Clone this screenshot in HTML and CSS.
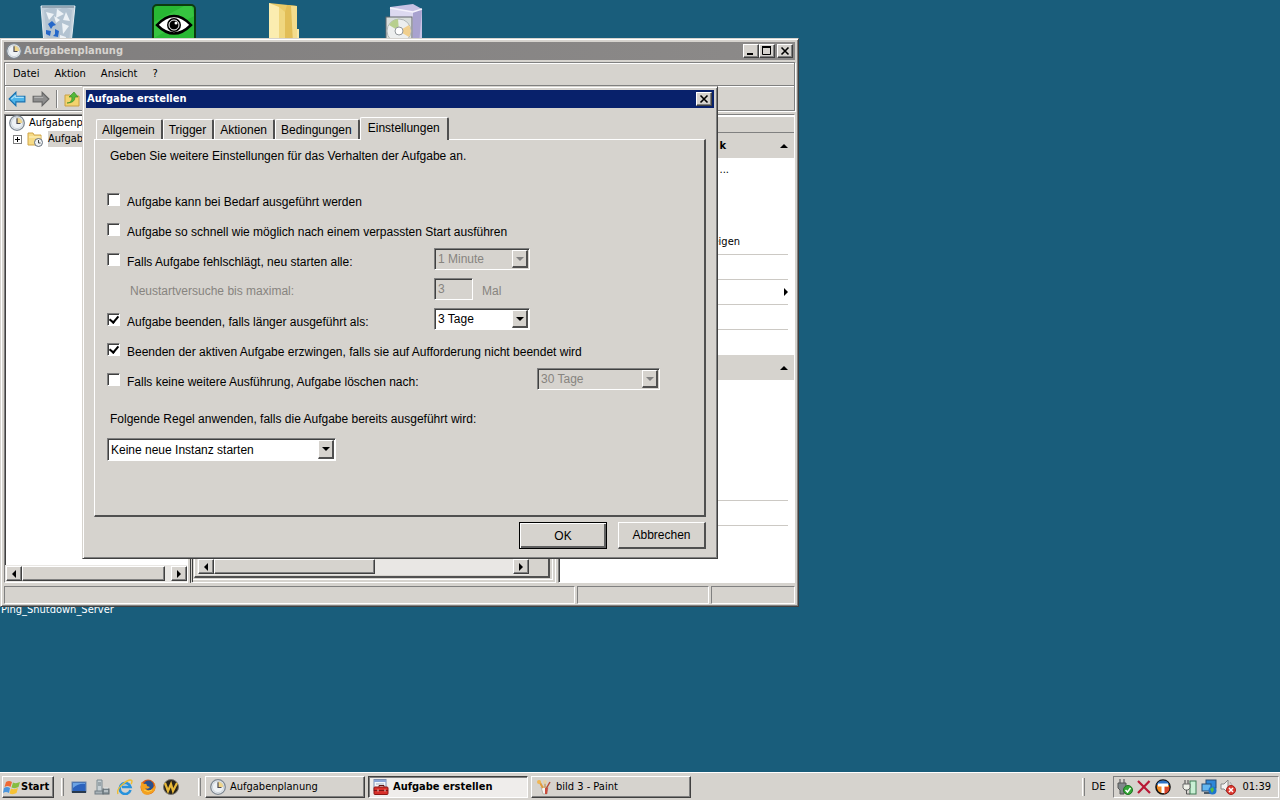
FILE: index.html
```
<!DOCTYPE html>
<html lang="de">
<head>
    <meta charset="utf-8">
    <title>Aufgabenplanung</title>
    <link rel="stylesheet" href="styles.css">
</head>
<body>
    <!-- shared icons -->
    <svg class="sprite" aria-hidden="true">
        <symbol id="clock" viewBox="0 0 16 16">
            <circle cx="8" cy="8" r="7.3" fill="#eef2f5" stroke="#7d8791" stroke-width="1.3"/>
            <path d="M8 8V2.2A5.8 5.8 0 0 1 13.8 8z" fill="#f0d58a"/>
            <circle cx="8" cy="8" r="5.6" fill="none" stroke="#c4cdd6" stroke-width=".8"/>
            <path d="M8 3.2V8.5H11.5" fill="none" stroke="#4c4a52" stroke-width="1.2"/>
        </symbol>
        <symbol id="close" viewBox="0 0 12 10">
            <path d="M2.5 1.5l7 7M9.5 1.5l-7 7" stroke="#000" stroke-width="1.6"/>
        </symbol>
    </svg>

    <div class="desktop">
        <svg class="shortcut recycle" width="36" height="40" viewBox="0 0 36 40">
            <path d="M1 2L35 2L31 40H4z" fill="#c3d0db" stroke="#e4edf3"/>
            <path d="M4 6l9-3 5 3 6-3 8 3-3 32H7z" fill="#b3c3d1"/>
            <path d="M6 8l8 2-5 6zM17 5l7 5-8 4zM26 8l4 9-7-1zM22 19l7 3-6 8zM14 12l6 4-4 3zM20 31l6 2-1 6-6-1z" fill="#edf2f6"/>
            <path d="M2 3h32" stroke="#93a5b3" stroke-width="2"/>
            <path d="M8 20l4-3 4 4-3 1-2 3zM15 25l4 2-1 6-5-1 2-2zM6 26l5 1-1 5-4-2z" fill="#2467c9"/>
        </svg>
        <svg class="shortcut eye" width="44" height="40" viewBox="0 0 44 40">
            <rect x="1" y="1" width="42" height="44" rx="4" fill="#28b834" stroke="#0c3b10" stroke-width="2"/>
            <path d="M2 18L32 2H40L42 12 2 34z" fill="#3fcb49" opacity=".6"/>
            <path d="M5 21Q22 3 39 21Q22 38 5 21z" fill="#fff" stroke="#000" stroke-width="2.500"/>
            <circle cx="22" cy="21" r="7" fill="#000"/>
            <circle cx="22" cy="21" r="5" fill="none" stroke="#fff"/>
            <circle cx="24" cy="19" r="1.500" fill="#fff"/>
        </svg>
        <svg class="shortcut folder" width="30" height="40" viewBox="0 0 30 40">
            <path d="M0 0L19 2L28 3V40H0z" fill="#e9cb68"/>
            <path d="M0 0L10 4V40H0z" fill="#fbedb0"/>
            <path d="M10 4L16 9V40H10z" fill="#f0d77f"/>
            <path d="M16 9L18 2 28 3V40H16z" fill="#e2be57"/>
            <path d="M22 3h6V40h-4z" fill="#f3dc8d"/>
            <path d="M28 26h2V40h-2z" fill="#f7e8aa"/>
        </svg>
        <svg class="shortcut setup" width="38" height="40" viewBox="0 0 38 40">
            <path d="M5 3L28 0L37 5V40H6z" fill="#c8c2e4"/>
            <path d="M5 3L28 8V40H6z" fill="#dcd9f0"/>
            <path d="M28 8l9-3-3 35h-6z" fill="#a8a2cf"/>
            <path d="M5 4l23 4 9-3" fill="none" stroke="#f4f2fc" stroke-width="1.5"/>
            <rect x="1" y="13" width="26" height="30" fill="#d9dedb" stroke="#62666c"/>
            <circle cx="14" cy="27" r="12" fill="#eceeee" stroke="#b0b6b6"/>
            <path d="M14 27L4 21A12 12 0 0 1 13 15z" fill="#b7cf8e"/>
            <path d="M14 27L24 21A12 12 0 0 1 24 33z" fill="#f0cf8e"/>
            <circle cx="14" cy="27" r="4" fill="#fff" stroke="#92979b"/>
        </svg>
        <div class="shortcut-label">Ping_Shutdown_Server</div>

        <!-- main window -->
        <div class="window app">
            <div class="titlebar inactive">
                <svg width="16" height="16"><use href="#clock"/></svg>
                <span class="caption">Aufgabenplanung</span>
                <button class="sys" aria-label="Minimieren"><svg width="12" height="10" viewBox="0 0 12 10"><path d="M2 8h6" stroke="#000" stroke-width="2"/></svg></button>
                <button class="sys" aria-label="Maximieren"><svg width="12" height="10" viewBox="0 0 12 10"><path d="M1.5 1v7.5h8V1M1 1h9" fill="none" stroke="#000"/><path d="M1 1h9" stroke="#000" stroke-width="2"/></svg></button>
                <button class="sys last" aria-label="Schließen"><svg width="12" height="10"><use href="#close"/></svg></button>
            </div>
            <div class="bars">
                <div class="menu">
                    <button>Datei</button>
                    <button>Aktion</button>
                    <button>Ansicht</button>
                    <button>?</button>
                </div>
                <div class="toolbar">
                    <svg width="18" height="16" viewBox="0 0 16 14"><path d="M1 7L7 1V4.500H15V9.500H7V13z" fill="#4db4ea" stroke="#1670b0"/><path d="M3 7L6.500 4V5.500H14" fill="none" stroke="#a9e0fa"/></svg>
                    <svg width="18" height="16" viewBox="0 0 16 14"><path d="M15 7L9 1V4.500H1V9.500H9V13z" fill="#8d8d8d" stroke="#666"/><path d="M2 5.500H10" stroke="#b8b8b8"/></svg>
                    <span class="divider"></span>
                    <svg width="16" height="16" viewBox="0 0 16 16"><path d="M1 4h5l1 1h8v10H1z" fill="#f3d36d" stroke="#c9a046"/><path d="M3 12Q8 12 8 6H5L10 1l4 5h-3Q11 12 3 12z" fill="#54b83a" stroke="#2d8520" stroke-width=".6"/></svg>
                </div>
            </div>
            <div class="main">
                <div class="pane tree">
                    <div class="tree-items">
                        <div class="node"><svg width="16" height="16"><use href="#clock"/></svg><span>Aufgabenp</span></div>
                        <div class="node child">
                            <svg width="9" height="9" viewBox="0 0 9 9"><rect x=".5" y=".5" width="8" height="8" fill="#fff" stroke="#808080"/><path d="M2 4.500h5M4.500 2v5" stroke="#000"/></svg>
                            <svg width="16" height="16" viewBox="0 0 16 16"><path d="M1 2h5l1 2h7v10H1z" fill="#f6db86" stroke="#d0a548"/><path d="M2 6h12" stroke="#fdf2c4"/><circle cx="11.500" cy="11.500" r="4" fill="#eef2f5" stroke="#66717c"/><path d="M11.500 9v3h2" fill="none" stroke="#444"/></svg>
                            <span class="selected">Aufgab</span>
                        </div>
                    </div>
                    <div class="scrollbar">
                        <button aria-label="Nach links"><i class="left"></i></button>
                        <span class="thumb wide"></span>
                        <button aria-label="Nach rechts"><i class="right"></i></button>
                    </div>
                </div>
                <div class="pane middle">
                    <div class="inner">
                        <div class="scrollbar">
                            <button aria-label="Nach links"><i class="left"></i></button>
                            <span class="thumb"></span>
                            <button aria-label="Nach rechts"><i class="right"></i></button>
                        </div>
                    </div>
                </div>
                <div class="pane actions">
                    <div class="actions-head"></div>
                    <div class="group"><b>k</b><i class="up"></i></div>
                    <div class="items">
                        <div class="item"><span>...</span></div>
                        <div class="item"></div>
                        <div class="item"></div>
                        <div class="item line"><span class="longer">eigen</span></div>
                        <div class="item line"></div>
                        <div class="item line"><i class="right"></i></div>
                        <div class="item line"></div>
                        <div class="item line last-line"></div>
                    </div>
                    <div class="group"><i class="up"></i></div>
                    <div class="items">
                        <div class="item"></div>
                        <div class="item"></div>
                        <div class="item"></div>
                        <div class="item"></div>
                        <div class="item line"></div>
                        <div class="item line"></div>
                    </div>
                </div>
            </div>
            <div class="status"><span></span><span></span><span></span></div>
        </div>

        <!-- dialog -->
        <div class="window dialog" role="dialog" aria-label="Aufgabe erstellen">
            <div class="titlebar">
                <span class="caption">Aufgabe erstellen</span>
                <button class="sys last" aria-label="Schließen"><svg width="12" height="10"><use href="#close"/></svg></button>
            </div>
            <div class="dialog-body">
                <div class="tabs" role="tablist">
                    <button role="tab">Allgemein</button>
                    <button role="tab">Trigger</button>
                    <button role="tab">Aktionen</button>
                    <button role="tab">Bedingungen</button>
                    <button role="tab" class="active" aria-selected="true">Einstellungen</button>
                </div>
                <div class="panel">
                    <p>Geben Sie weitere Einstellungen für das Verhalten der Aufgabe an.</p>
                    <div class="options">
                        <div class="row">
                            <input type="checkbox" id="demand">
                            <label for="demand">Aufgabe kann bei Bedarf ausgeführt werden</label>
                        </div>
                        <div class="row">
                            <input type="checkbox" id="missed">
                            <label for="missed">Aufgabe so schnell wie möglich nach einem verpassten Start ausführen</label>
                        </div>
                        <div class="row">
                            <input type="checkbox" id="restart">
                            <label for="restart" class="wide">Falls Aufgabe fehlschlägt, neu starten alle:</label>
                            <div class="combo disabled"><select disabled aria-label="Intervall"><option>1 Minute</option></select><span class="arrow"><i class="down"></i></span></div>
                        </div>
                        <div class="row sub">
                            <label for="retries">Neustartversuche bis maximal:</label>
                            <input type="text" id="retries" value="3" disabled>
                            <span>Mal</span>
                        </div>
                        <div class="row">
                            <input type="checkbox" id="stop" checked>
                            <label for="stop" class="wide">Aufgabe beenden, falls länger ausgeführt als:</label>
                            <div class="combo"><select aria-label="Dauer"><option>3 Tage</option></select><span class="arrow"><i class="down"></i></span></div>
                        </div>
                        <div class="row">
                            <input type="checkbox" id="force" checked>
                            <label for="force">Beenden der aktiven Aufgabe erzwingen, falls sie auf Aufforderung nicht beendet wird</label>
                        </div>
                        <div class="row">
                            <input type="checkbox" id="expire">
                            <label for="expire" class="wider">Falls keine weitere Ausführung, Aufgabe löschen nach:</label>
                            <div class="combo medium disabled"><select disabled aria-label="Löschen nach"><option>30 Tage</option></select><span class="arrow"><i class="down"></i></span></div>
                        </div>
                    </div>
                    <label class="rule" for="rule">Folgende Regel anwenden, falls die Aufgabe bereits ausgeführt wird:</label>
                    <div class="combo large"><select id="rule"><option>Keine neue Instanz starten</option></select><span class="arrow"><i class="down"></i></span></div>
                </div>
                <div class="buttons">
                    <button class="default">OK</button>
                    <button>Abbrechen</button>
                </div>
            </div>
        </div>
    </div>

    <div class="taskbar">
        <button class="start">
            <svg width="18" height="18" viewBox="0 0 18 18"><path d="M3 4Q6 2 9 4L7.500 9Q5 7 1.500 9z" fill="#ee6a35"/><path d="M10 4.500Q13 6 17 4L15.500 9Q12 11 8.500 9.500z" fill="#86bd3f"/><path d="M1 10Q4 8 7 10L6 15Q3 13 0 15z" fill="#4a95dd"/><path d="M8 10.500Q11 12 15 10L13.500 15Q10 17 6.500 15.500z" fill="#f6c235"/></svg>
            Start
        </button>
        <span class="grip"></span>
        <div class="quick">
            <svg width="16" height="16" viewBox="0 0 16 16"><rect x="1" y="3" width="14" height="10" fill="#2b62bd" stroke="#6b87ac"/><path d="M2 9Q8 4 14 5V4H2z" fill="#6ca3e4"/><path d="M1 13h14" stroke="#28394d" stroke-width="2"/></svg>
            <svg width="16" height="16" viewBox="0 0 16 16"><path d="M3 1h5v13H3z" fill="#c7d0d4" stroke="#7d8a90"/><path d="M4 4h3M4 6h3" stroke="#6c7a80"/><rect x="1" y="12" width="8" height="3" fill="#a8b2b7" stroke="#737f86"/><rect x="9" y="10" width="6" height="5" fill="#8d989e" stroke="#5d686f"/><path d="M10 9h4M10 12h4" stroke="#dfe5e7"/></svg>
            <svg width="16" height="16" viewBox="0 0 16 16"><path d="M13.500 11A5.500 5.500 0 1 1 13.500 8H5" fill="none" stroke="#2792dc" stroke-width="2.600"/><path d="M1 15Q-1 11 6 5T15 2Q15 4 14 5" fill="none" stroke="#efbe32" stroke-width="1.400"/></svg>
            <svg width="16" height="16" viewBox="0 0 16 16"><circle cx="8" cy="8" r="7.500" fill="#d85a14"/><circle cx="8.500" cy="6.500" r="5" fill="#28518f"/><path d="M1 3L4 5Q7 4 7 7L10 8Q8 11 5 9Q9 14 13 9T14 4Q18 12 10 15T1 9z" fill="#f3a01f"/><path d="M4 11Q8 14 12 11" fill="none" stroke="#fbd04a"/></svg>
            <svg width="16" height="16" viewBox="0 0 16 16"><circle cx="8" cy="8" r="7.500" fill="#28231a" stroke="#77746c"/><path d="M2 4l3 8 3-7 2 7 4-8" fill="none" stroke="#e7b838" stroke-width="2.200"/></svg>
        </div>
        <span class="grip narrow"></span>
        <div class="tasks">
            <button><svg width="16" height="16"><use href="#clock"/></svg>Aufgabenplanung</button>
            <button class="pressed"><svg width="16" height="16" viewBox="0 0 16 16"><rect x="1" y=".5" width="12" height="11" fill="#f4f6fa" stroke="#7c8fb2"/><path d="M1 2h12" stroke="#8ba5d6" stroke-width="2"/><path d="M3 5h8" stroke="#a7b0bd"/><path d="M6 8V6.500h5V8" fill="none" stroke="#5d1715"/><rect x="1" y="8" width="14" height="7.500" rx="1" fill="#d8302a" stroke="#8d1714"/><path d="M1 11.500h14" stroke="#7d1512"/><path d="M5 10.500v2M12 10.500v2" stroke="#f4dede"/></svg>Aufgabe erstellen</button>
            <button><svg width="16" height="16" viewBox="0 0 16 16"><path d="M5 8L7 15h4l1-7z" fill="#f5f5f2" stroke="#b9b4aa"/><path d="M7 9L3 2" stroke="#e29b3a" stroke-width="2"/><path d="M9 9V3" stroke="#c8a169" stroke-width="1.500"/><path d="M10 10l4-7" stroke="#b24b35" stroke-width="1.500"/><circle cx="3" cy="3" r="2" fill="#f0b653"/><circle cx="9" cy="3" r="2" fill="#e8d2a5"/><path d="M9 9h3l-1 6H9z" fill="#c94b3d"/></svg>bild 3 - Paint</button>
        </div>
        <span class="grip"></span>
        <span class="lang">DE</span>
        <div class="tray">
            <svg width="16" height="16" viewBox="0 0 16 16"><path d="M3 0v4M7 0v4" stroke="#777" stroke-width="1.500"/><path d="M1 4h8v5l-2 2v4H3v-4L1 9z" fill="#80888b" stroke="#555"/><circle cx="11" cy="11" r="4.500" fill="#35a838" stroke="#1c7521"/><path d="M8.500 11l2 2 3-4" fill="none" stroke="#fff" stroke-width="1.500"/></svg>
            <svg width="16" height="16" viewBox="0 0 16 16"><path d="M2 2l12 12M13.500 2L2 14" stroke="#b81735" stroke-width="2.200"/></svg>
            <svg width="16" height="16" viewBox="0 0 16 16"><circle cx="8" cy="8" r="7" fill="#f18b23" stroke="#111" stroke-width="1.600"/><path d="M1.500 6A7 7 0 0 1 14.500 6z" fill="#2d74c7"/><path d="M9 8h5.500A7 7 0 0 1 9 15z" fill="#d9452a"/><path d="M3 6h10M8 6v8" stroke="#fff" stroke-width="3"/></svg>
            <svg class="gap" width="16" height="16" viewBox="0 0 16 16"><rect x="8" y="2" width="6" height="13" fill="#c9f0d4" stroke="#3c7a52"/><path d="M3 1v4M6 1v4" stroke="#444"/><path d="M1 5h7v4l-2 2H3L1 9z" fill="#eef0e8" stroke="#666"/><path d="M4.500 11v4H8" fill="none" stroke="#555"/></svg>
            <svg width="16" height="16" viewBox="0 0 16 16"><rect x="5" y="1" width="10" height="8" fill="#2f87d8" stroke="#274c75"/><rect x="1" y="5" width="9" height="7" fill="#63b6f0" stroke="#274c75"/><path d="M3 14h6" stroke="#4b5a68" stroke-width="2"/><circle cx="11.500" cy="11.500" r="4" fill="#1e75cd"/><path d="M9 10l3-2 1 3-2 3z" fill="#54bb49"/></svg>
            <svg width="16" height="16" viewBox="0 0 16 16"><path d="M1 5h3l4-4v13l-4-4H1z" fill="#f2f2f2" stroke="#888"/><path d="M10 3q2 2 2 5" fill="none" stroke="#aaa"/><circle cx="11" cy="11" r="4.500" fill="#dd3b32" stroke="#a51e18"/><path d="M9 9l4 4M13 9l-4 4" stroke="#fff" stroke-width="1.500"/></svg>
            <span class="time">01:39</span>
        </div>
    </div>
</body>
</html>
```
FILE: styles.css
```
* {
    box-sizing: border-box;
}
body {
    margin: 0;
    height: 100vh;
    display: flex;
    flex-direction: column;
    overflow: hidden;
    background: #195d7b;
    color: #000;
    font-family: "DejaVu Sans Condensed", "Noto Sans", sans-serif;
    font-size: 11px;
    line-height: 14px;
}
button, input, select {
    font: inherit;
    color: inherit;
    margin: 0;
    padding: 0;
    border: 0;
    border-radius: 0;
    background: none;
}
svg {
    display: block;
    flex: none;
}
.sprite {
    position: absolute;
    width: 0;
    height: 0;
}

/* small arrows */
.left, .right, .up, .down {
    width: 0;
    height: 0;
    border: 4px solid transparent;
}
.left {
    border-left: 0;
    border-right-color: #000;
}
.right {
    border-right: 0;
    border-left-color: #000;
}
.up {
    border-top: 0;
    border-bottom-color: #000;
}
.down {
    border-bottom: 0;
    border-top-color: #000;
}

/* desktop */
.desktop {
    position: relative;
    flex: 1;
    overflow: hidden;
}
.shortcut, .shortcut-label {
    position: absolute;
    top: 4px;
}
.recycle { left: 40px; }
.eye { left: 152px; }
.folder { left: 269px; top: 3px; }
.setup { left: 385px; }
.shortcut-label {
    left: 1px;
    top: 603px;
    color: #fff;
}

/* windows */
.window {
    position: absolute;
    display: flex;
    flex-direction: column;
    padding: 3px;
    background: #d6d3ce;
    border: 1px solid #d6d3ce;
    border-right-color: #404040;
    border-bottom-color: #404040;
    box-shadow: inset 1px 1px #fff, inset -1px -1px #808080;
}
.app {
    left: 0;
    top: 38px;
    width: 799px;
    height: 569px;
    padding-bottom: 2px;
}
.dialog {
    left: 82px;
    top: 86px;
    width: 636px;
}
.titlebar {
    display: flex;
    align-items: center;
    height: 18px;
    padding: 0 2px 0 1px;
    background: #08216b;
    color: #fff;
    font-weight: bold;
}
.inactive {
    padding-left: 2px;
    background: linear-gradient(90deg, #807e7e, #8c8a89);
    color: #d6d3ce;
}
.caption {
    flex: 1;
}
.inactive .caption {
    padding-left: 2px;
}
.sys {
    display: flex;
    align-items: center;
    justify-content: center;
    width: 16px;
    height: 14px;
    background: #d6d3ce;
    border: 1px solid #fff;
    border-right-color: #404040;
    border-bottom-color: #404040;
    box-shadow: inset -1px -1px #808080;
}
.inactive .last {
    margin-left: 2px;
}

/* menu and toolbar */
.bars {
    margin-top: 2px;
    border: 1px solid #808080;
    box-shadow: inset 1px 1px #fff, 1px 1px #fff;
}
.menu {
    display: flex;
    gap: 15px;
    height: 23px;
    padding-left: 8px;
    border-bottom: 1px solid #808080;
}
.toolbar {
    display: flex;
    align-items: center;
    gap: 6px;
    height: 24px;
    padding-left: 3px;
    border-top: 1px solid #fff;
}
.divider {
    width: 2px;
    height: 18px;
    border-left: 1px solid #808080;
    border-right: 1px solid #fff;
}

/* panes */
.main {
    display: flex;
    flex: 1;
    gap: 2px;
    margin-top: 3px;
}
.pane {
    display: flex;
    flex-direction: column;
    background: #fff;
    border: 1px solid #808080;
    border-right-color: #fff;
    border-bottom-color: #fff;
    box-shadow: inset 1px 1px #404040;
    overflow: hidden;
}
.tree {
    width: 184px;
}
.tree-items {
    flex: 1;
    padding: 0 0 0 4px;
    white-space: nowrap;
}
.node {
    display: flex;
    align-items: center;
    gap: 4px;
    height: 16px;
}
.child {
    gap: 5px;
    padding-left: 4px;
}
.child span {
    flex: 1;
    padding: 1px 0;
}
.selected {
    background: #d6d3ce;
}
.scrollbar {
    display: flex;
    height: 17px;
    padding: 1px 0 1px 1px;
    background: #e9e7e4;
}
.scrollbar button {
    display: flex;
    align-items: center;
    justify-content: center;
    width: 16px;
}
.scrollbar button, .thumb {
    background: #d6d3ce;
    border: 1px solid #fff;
    border-right-color: #404040;
    border-bottom-color: #404040;
    box-shadow: inset -1px -1px #808080;
}
.thumb {
    width: 161px;
    margin-right: auto;
}
.wide {
    width: 143px;
}
.middle {
    flex: 1;
    padding: 0 5px 4px 1px;
    background: #d6d3ce;
    border-left: 3px double #404040;
    box-shadow: inset -2px -2px #d6d3ce, inset -3px -3px #fff;
}
.inner {
    display: flex;
    flex: 1;
    flex-direction: column;
    justify-content: flex-end;
    padding: 0 19px 1px 2px;
    border: 1px solid #fff;
    border-right: 2px solid #505050;
    border-bottom: 2px solid #505050;
}
.actions {
    width: 237px;
}
.actions-head {
    height: 18px;
    background: #d6d3ce;
    border-top: 2px solid #fff;
    border-bottom: 1px solid #808080;
}
.group {
    display: flex;
    align-items: center;
    justify-content: flex-end;
    gap: 54px;
    height: 25px;
    padding: 0 6px 0 3px;
    background: #d6d3ce;
}
.items {
    padding: 0 6px 0 3px;
}
.item {
    display: flex;
    align-items: center;
    justify-content: flex-end;
    height: 24px;
}
.line {
    height: 25px;
    border-bottom: 1px solid #ccc9c4;
}
.items .last-line {
    border-bottom: 0;
}
.items:last-child .line:last-child {
    height: 25px;
}
.item span {
    padding-right: 59px;
}
.item .longer {
    padding-right: 48px;
}
.status {
    display: flex;
    gap: 2px;
    height: 18px;
    margin-top: 3px;
}
.status span {
    width: 84px;
    border: 1px solid #808080;
    border-right-color: #fff;
    border-bottom-color: #fff;
}
.status span:first-child {
    flex: 1;
}
.status span:nth-child(2) {
    width: 132px;
}

/* dialog contents */
.dialog-body {
    padding: 9px 8px 6px;
    font-family: "Liberation Sans", Arial, sans-serif;
    font-size: 12px;
    line-height: 16px;
}
.tabs {
    display: flex;
    align-items: flex-end;
    padding-left: 2px;
}
.tabs button {
    height: 20px;
    padding: 0 6px 0 5px;
    border: 1px solid #fff;
    border-right: 2px solid #505050;
    border-bottom: 0;
    border-radius: 2px 2px 0 0;
}
.tabs .active {
    height: 23px;
    padding: 0 7px 3px;
    margin-bottom: -1px;
    background: #d6d3ce;
}
.panel {
    padding: 8px 12px 54px;
    border: 1px solid #fff;
    border-right: 2px solid #505050;
    border-bottom: 2px solid #505050;
}
.panel p {
    margin: 0 3px 20px;
}
.row {
    display: flex;
    align-items: center;
    height: 30px;
}
.row label {
    padding: 5px 0 0 7px;
}
.row .wide {
    width: 314px;
}
.row .wider {
    width: 417px;
}
.sub {
    color: #87847f;
}
.sub label {
    width: 327px;
    padding: 3px 0 0 23px;
}
.sub span {
    padding: 3px 0 0 9px;
}
input[type="checkbox"] {
    appearance: none;
    display: grid;
    place-items: center;
    width: 13px;
    height: 13px;
    background: #fff;
}
input, .combo {
    border: 1px solid #808080;
    border-right-color: #fff;
    border-bottom-color: #fff;
    box-shadow: inset 1px 1px #404040;
}
input[type="checkbox"]:checked::after {
    content: "";
    width: 4px;
    height: 7px;
    margin-bottom: 2px;
    border: solid #000;
    border-width: 0 2px 2px 0;
    transform: rotate(40deg);
}
input[type="text"] {
    width: 39px;
    height: 22px;
    padding-left: 3px;
    color: #87847f;
}
.combo {
    display: flex;
    width: 96px;
    height: 22px;
    padding: 1px;
    background: #fff;
}
.combo select {
    appearance: none;
    flex: 1;
    min-width: 0;
    padding-left: 2px;
}
.medium {
    width: 123px;
}
.large {
    width: 229px;
    height: 23px;
}
.arrow {
    display: flex;
    align-items: center;
    justify-content: center;
    width: 16px;
    background: #d6d3ce;
    border: 1px solid #fff;
    border-right: 2px solid #505050;
    border-bottom: 2px solid #505050;
    pointer-events: none;
}
.disabled {
    background: #d6d3ce;
}
.disabled select {
    color: #87847f;
    opacity: 1;
}
.disabled .down {
    border-top-color: #808080;
}
.rule {
    display: block;
    margin: 17px 3px 11px;
}
.buttons {
    display: flex;
    justify-content: flex-end;
    gap: 11px;
    margin-top: 5px;
}
.buttons button {
    width: 88px;
    height: 27px;
    border: 1px solid #fff;
    border-right: 2px solid #505050;
    border-bottom: 2px solid #505050;
}
.buttons .default {
    border: 1px solid #000;
    box-shadow: inset 1px 1px #fff, inset -2px -2px #606060;
}

/* taskbar */
.taskbar {
    display: flex;
    align-items: center;
    height: 28px;
    padding: 0 1px 0 2px;
    background: #d6d3ce;
    border-top: 1px solid #fff;
}
.taskbar button {
    display: flex;
    align-items: center;
    height: 22px;
    border: 1px solid #fff;
    border-right-color: #404040;
    border-bottom-color: #404040;
    box-shadow: inset -1px -1px #808080;
}
.taskbar .start {
    width: 52px;
    font-weight: bold;
}
.grip {
    width: 3px;
    height: 18px;
    margin: 0 7px;
    border-left: 1px solid #fff;
    border-right: 1px solid #808080;
}
.narrow {
    margin-right: 4px;
}
.quick {
    display: flex;
    gap: 7px;
    width: 120px;
}
.tasks {
    display: flex;
    flex: 1;
    gap: 3px;
}
.tasks button {
    gap: 4px;
    width: 160px;
    padding-left: 4px;
}
.tasks .pressed {
    background: #efedeb;
    border-color: #404040 #fff #fff #404040;
    box-shadow: inset 1px 1px #808080;
    font-weight: bold;
}
.lang {
    margin-right: 8px;
}
.tray {
    display: flex;
    align-items: center;
    gap: 3px;
    height: 22px;
    padding: 0 7px 0 3px;
    border: 1px solid #808080;
    border-right-color: #fff;
    border-bottom-color: #fff;
}
.tray .gap {
    margin-left: 8px;
}
.time {
    margin-left: 3px;
}
```
